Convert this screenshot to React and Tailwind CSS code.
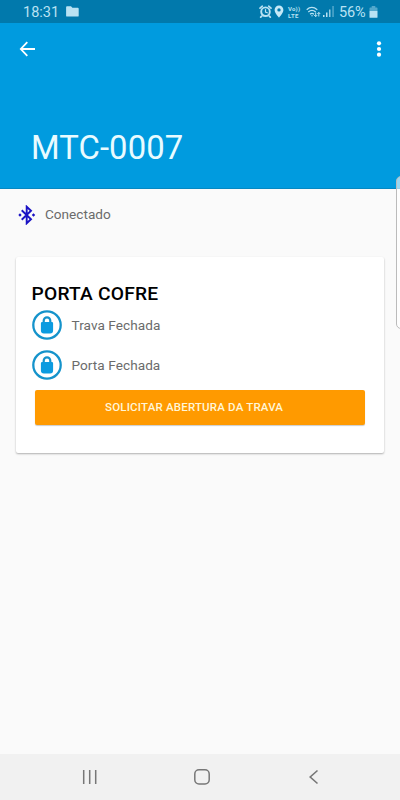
function FolderIcon() {
  return (
    <svg width="13" height="11" viewBox="0 0 13 11" className="fill-[#b9e2f3]">
      <path d="M1 .3h4l1.400 1.500h5.400q.9 0 .9.900v7q0 .9-.9.900H1q-.9 0-.9-.9V1.200Q.1.300 1 .3z" />
    </svg>
  );
}

function AlarmIcon() {
  return (
    <svg width="13" height="13" viewBox="0 0 13 13" fill="none" stroke="#b9e2f3" strokeLinecap="round">
      <circle cx="6.500" cy="6.700" r="4.300" strokeWidth="1.900" />
      <path d="M6.500 4.500v2.500l1.800.8" strokeWidth="1.200" />
      <path d="M1 3.100 3.300 1.200M12 3.100 9.700 1.200M2.700 11.200l-1 1M10.300 11.200l1 1" strokeWidth="1.700" />
    </svg>
  );
}

function PinIcon() {
  return (
    <svg width="10" height="13" viewBox="0 0 10 13" className="fill-[#c5e9f7]">
      <path fillRule="evenodd" d="M5 .5a4.400 4.400 0 0 0-4.400 4.400C.6 8 5 12.500 5 12.500S9.400 8 9.400 4.900A4.400 4.400 0 0 0 5 .5zm0 2.700a1.700 1.700 0 1 1 0 3.400 1.700 1.700 0 0 1 0-3.400z" />
    </svg>
  );
}

function WifiIcon() {
  return (
    <svg width="15" height="12" viewBox="0 0 15 12" fill="none" stroke="#b9e2f3" strokeWidth="1.300">
      <path d="M.7 3.700q5-4.600 10.600 0M2.300 6q3.700-3.200 7.400 0M4 8.200q2-1.600 4 0" />
      <circle cx="6" cy="9.700" r=".7" fill="#b9e2f3" stroke="none" />
      <path d="M9.700 6.500v4M8.200 9l1.500 1.700L11.200 9M12.800 10.500v-4M11.400 8l1.400-1.600L14.200 8" strokeWidth="1" />
    </svg>
  );
}

function SignalIcon() {
  return (
    <svg width="11" height="11" viewBox="0 0 11 11" className="fill-[#b9e2f3]">
      <path d="M0 9h1.500v2H0zM3 6.500h1.500V11H3z" />
      <path d="M6 3.500h1.500V11H6z" opacity=".8" />
      <path d="M9.300 0h1.500v11H9.300z" opacity=".45" />
    </svg>
  );
}

function BatteryIcon() {
  return (
    <svg width="9" height="12" viewBox="0 0 9 12" className="fill-[#b9e2f3]">
      <path d="M2.700 0h3.600v1.500h1.500q.7 0 .7.700V5h-8V2.200q0-.7.700-.7h1.500z" opacity=".45" />
      <path d="M.5 5h8v6.200q0 .6-.7.600H1.200q-.7 0-.7-.6z" />
    </svg>
  );
}

function BluetoothIcon() {
  return (
    <svg width="18" height="20" viewBox="0 0 18 20" fill="none" stroke="#1a12c4" strokeWidth="1.900">
      <path d="M3.700 5.300 13 14.200l-4.300 4.100V1.700L13 5.800l-9.300 8.900" />
      <path d="M.3 10l1.700-1.700L3.700 10 2 11.700zM13.800 10l1.700-1.700 1.700 1.700-1.700 1.700z" fill="#1a12c4" stroke="none" />
    </svg>
  );
}

function LockIcon() {
  return (
    <svg width="30" height="30" viewBox="0 0 30 30" fill="none">
      <circle cx="15" cy="15" r="13.700" stroke="#1593cb" strokeWidth="2.300" />
      <path d="M11.700 13v-2.300a3.300 3.300 0 0 1 6.600 0V13" stroke="#1593cb" strokeWidth="2.200" />
      <path d="M10.200 12h9.600q1.300 0 1.300 1.300v7q0 3.200-3 3.200h-6.200q-3 0-3-3.200v-7q0-1.300 1.300-1.300z" fill="#0b9be0" />
    </svg>
  );
}

const items = ['Trava Fechada', 'Porta Fechada'];

export default function App() {
  return (
    <div className="relative flex h-[800px] w-[400px] flex-col overflow-hidden bg-[#fafafa] font-['Roboto',sans-serif]">
      <div className="flex h-[23px] shrink-0 items-center bg-[#0179ac] pl-[23px] pr-[22px] text-[#b9e2f3]">
        <span className="w-[43px] pt-[3px] text-[14.500px] leading-none">18:31</span>
        <FolderIcon />
        <div className="ml-auto flex items-center">
          <AlarmIcon />
          <span className="ml-[2px]"><PinIcon /></span>
          <span className="ml-[4px] flex w-[13px] flex-col text-[6px] font-bold">
            <span className="h-[7px] leading-[7px] tracking-[0.200px]">Vo))</span>
            <span className="h-[7px] leading-[7px] tracking-[0.400px]">LTE</span>
          </span>
          <span className="ml-[5px]"><WifiIcon /></span>
          <span className="ml-[2px]"><SignalIcon /></span>
          <span className="ml-[5px] w-[30px] pt-[3px] text-[14.500px] leading-none tracking-[-0.100px]">56%</span>
          <BatteryIcon />
        </div>
      </div>

      <header className="flex h-[166px] shrink-0 flex-col border-b border-[#0688c2] bg-[#009bdf]">
        <div className="flex h-[52px] items-center justify-between pl-[19px] pr-[18px]">
          <svg width="17" height="16" viewBox="0 0 17 16" fill="none" stroke="#fff" strokeWidth="1.800">
            <path d="M8.300 1.200 1.800 8l6.500 6.800M1.800 8H16" />
          </svg>
          <svg width="6" height="18" viewBox="0 0 6 18" fill="#fff">
            <circle cx="3" cy="3.300" r="2.100" />
            <circle cx="3" cy="9" r="2.100" />
            <circle cx="3" cy="14.700" r="2.100" />
          </svg>
        </div>
        <h1 className="mt-[53px] pl-[31px] text-[32.800px] font-normal leading-[40px] tracking-[0.100px] text-[#e9fbff]">MTC-0007</h1>
      </header>

      <main className="flex flex-1 flex-col">
        <div className="mt-[16px] flex h-[20px] items-center pl-[18px]">
          <BluetoothIcon />
          <span className="ml-[9px] text-[13.600px] leading-none text-[#6b6b6b]">Conectado</span>
        </div>

        <section className="ml-[15.500px] mr-[16px] mt-[32px] flex h-[196px] flex-col rounded-[2px] bg-white px-[16px] pt-[25px] shadow-[0_1px_2px_rgba(0,0,0,0.300)]">
          <h2 className="text-[19.200px] font-medium leading-[24px] tracking-[0.220px] text-black">PORTA COFRE</h2>
          <ul className="mt-[4px] flex flex-col gap-[10px]">
            {items.map((item) => (
              <li key={item} className="flex h-[30px] items-center">
                <LockIcon />
                <span className="ml-[10px] pt-[2px] text-[13.600px] leading-none tracking-[0.060px] text-[#6b6b6b]">{item}</span>
              </li>
            ))}
          </ul>
          <button type="button" className="ml-[3px] mt-[10px] flex h-[35px] w-[330px] items-center rounded-[2px] bg-[#ff9a00] pl-[70.500px] pt-px text-[11.500px] font-medium tracking-[0.180px] text-[#fff6d8] shadow-[0_1px_1px_rgba(0,0,0,0.200)]">
            SOLICITAR ABERTURA DA TRAVA
          </button>
        </section>
      </main>

      <nav className="flex h-[46px] shrink-0 items-center justify-between bg-[#f1f1f1] pl-[82px] pr-[81px]">
        <svg width="16" height="16" viewBox="0 0 16 16" stroke="#777" strokeWidth="1.500">
          <path d="M1.700 1v14M7.700 1v14M13.700 1v14" />
        </svg>
        <svg width="16" height="16" viewBox="0 0 16 16" fill="none" stroke="#777" strokeWidth="1.500" className="mr-[3px]">
          <rect x=".8" y=".8" width="14.400" height="14.200" rx="4.200" />
        </svg>
        <svg width="11" height="16" viewBox="0 0 11 16" fill="none" stroke="#777" strokeWidth="1.600">
          <path d="M9.500 1.500 2.200 8l7.300 6.500" />
        </svg>
      </nav>

      {/* edge panel handle overlapping the right side */}
      <div className="absolute right-[-6px] top-[176px] h-[153px] w-[10px] rounded-[5px] border border-[#bbbbbb] bg-white/60" />
    </div>
  );
}
